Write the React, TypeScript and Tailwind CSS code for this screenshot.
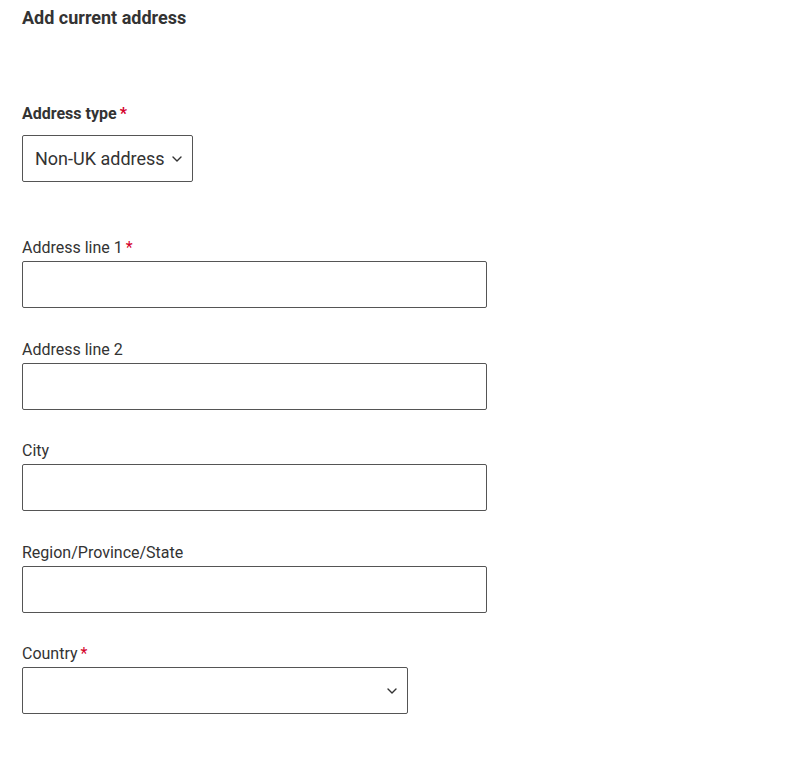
import React from "react";

const Chevron = () => (
  <svg width="10" height="6" viewBox="0 0 10 6" fill="none">
    <path d="M1 1l4 4 4-4" stroke="#333" strokeWidth="1.4" strokeLinecap="round" strokeLinejoin="round" />
  </svg>
);

const Req = () => <span className="ml-[3px] text-[#d4002a]">*</span>;

function Field({ label, required }: { label: string; required?: boolean }) {
  return (
    <div>
      <div className="pt-[1px] text-[16px] leading-[20px] text-[#333]">
        {label}
        {required && <Req />}
      </div>
      <div className="mt-[3px] h-[47px] w-[465px] rounded-[2px] border border-[#555] bg-white" />
    </div>
  );
}

export default function App() {
  return (
    <div
      className="min-h-[759px] w-[809px] bg-white pl-[22px] pt-[8px] text-[#333]"
      style={{ fontFamily: "Roboto, 'Liberation Sans', sans-serif" }}
    >
      <h1 className="text-[18px] font-bold leading-[20px] text-[#333]">Add current address</h1>

      <div className="mt-[76px]">
        <div className="text-[16px] font-bold leading-[20px]">
          Address type
          <Req />
        </div>
        <div className="mt-[11px] flex h-[47px] w-[171px] items-center justify-between rounded-[2px] border border-[#555] pl-[12px] pr-[10px]">
          <span className="text-[18px] text-[#333]">Non-UK address</span>
          <Chevron />
        </div>
      </div>

      <div className="mt-[55px] flex flex-col gap-[30.5px]">
        <Field label="Address line 1" required />
        <Field label="Address line 2" />
        <Field label="City" />
        <Field label="Region/Province/State" />
        <div>
          <div className="pt-[1px] text-[16px] leading-[20px] text-[#333]">
            Country
            <Req />
          </div>
          <div className="mt-[3px] flex h-[47px] w-[386px] items-center justify-end rounded-[2px] border border-[#555] pr-[10px]">
            <Chevron />
          </div>
        </div>
      </div>
    </div>
  );
}
